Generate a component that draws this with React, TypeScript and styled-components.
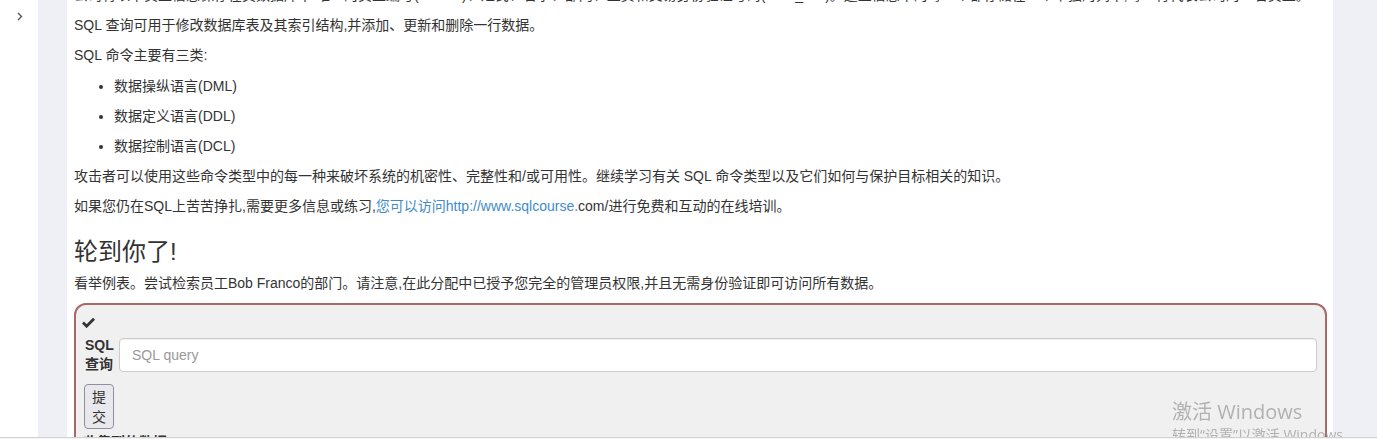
import React from "react";
import styled, { createGlobalStyle } from "styled-components";

const Global = createGlobalStyle`
  html, body { margin: 0; padding: 0; overflow: hidden; background: #fff; }
  body {
    font-family: "Liberation Sans", "Noto Sans CJK SC", Arial, sans-serif;
    font-size: 14px;
    line-height: 20px;
    color: #333;
  }
  * { box-sizing: border-box; }
`;

const Page = styled.div`
  display: flex;
  height: 439px;
  overflow: hidden;
`;

const Sidebar = styled.div`
  width: 38px;
  flex: none;
  background: #fff;
  padding: 6px 0 0 17px;
`;

const Band = styled.div<{ $w: number }>`
  width: ${(p) => p.$w}px;
  flex: none;
  background: #eff0f6;
`;

const Main = styled.main`
  flex: 1;
  background: #fff;
  padding: 0 6px 0 7px;
  min-width: 0;
`;

const Article = styled.div`
  margin-top: -15px;
`;

const P = styled.p`
  margin: 0 0 10px;
  white-space: nowrap;
`;

const List = styled.ul`
  margin: 11px 0 10px;
  padding-left: 40px;
`;

const Item = styled.li`
  margin: 0 0 10px;
  &::marker { font-size: 13px; }
`;

const Link = styled.a`
  color: #428bca;
  text-decoration: none;
`;

const Heading = styled.h3`
  margin: 23px 0 8px;
  font-size: 24px;
  line-height: 26.4px;
  font-weight: 400;
  color: #333;
`;

const AttackBox = styled.div`
  border: 2px solid #a96868;
  border-radius: 12px;
  background: #f0f0f0;
  padding: 7px 8px 0 6px;
  height: 200px;
`;

const CheckRow = styled.div`
  height: 20px;
  display: flex;
  align-items: center;
  color: #333;
`;

const FormRow = styled.div`
  display: flex;
  align-items: center;
  gap: 4px;
  margin-top: 4px;
  padding-left: 3px;
`;

const Label = styled.label`
  width: 30px;
  flex: none;
  font-weight: bold;
  line-height: 19px;
`;

const Input = styled.input`
  flex: 1;
  height: 34px;
  padding: 6px 12px;
  border: 1px solid #ccc;
  border-radius: 4px;
  background: #fff;
  font-family: "Liberation Sans", "Noto Sans CJK SC", Arial, sans-serif;
  font-size: 14px;
  color: #555;
  box-shadow: inset 0 1px 1px rgba(0, 0, 0, 0.075);
  &::placeholder { color: #999; }
`;

const SubmitButton = styled.button`
  display: block;
  width: 30px;
  margin: 10px 0 0 2px;
  padding: 1.5px 6px;
  border: 1px solid #8f8f9d;
  border-radius: 4px;
  background: #e9e9ed;
  font-family: "Liberation Sans", "Noto Sans CJK SC", Arial, sans-serif;
  font-size: 14px;
  line-height: 20px;
  color: #333;
  text-align: center;
`;

const Output = styled.div`
  margin-top: 3px;
  padding-left: 1px;
  font-weight: bold;
`;

const Watermark = styled.div`
  position: fixed;
  left: 1172px;
  top: 399px;
  color: rgba(150, 150, 150, 0.7);
  font-family: "Open Sans", "Noto Sans CJK SC", sans-serif;
  pointer-events: none;
`;

const WmTitle = styled.div`
  font-size: 20px;
  line-height: 26px;
`;

const WmSub = styled.div`
  font-size: 14px;
  line-height: 20px;
`;

const BottomEdge = styled.div`
  position: fixed;
  left: 0;
  right: 0;
  bottom: 0;
  height: 2px;
  border-top: 1px solid #d2d2d2;
  background: #f4f4f4;
`;

const Chevron = () => (
  <svg width="6" height="9" viewBox="0 0 6 9">
    <path d="M1 1 L4.5 4.5 L1 8" fill="none" stroke="#555" strokeWidth="1.4" />
  </svg>
);

const Check = () => (
  <svg width="13" height="11" viewBox="0 0 13 11">
    <path d="M1 5.6 L4.6 9.2 L12 1.8" fill="none" stroke="#333" strokeWidth="2.8" strokeLinejoin="miter" />
  </svg>
);

export default function App() {
  return (
    <>
      <Global />
      <Page>
        <Sidebar>
          <Chevron />
        </Sidebar>
        <Band $w={29} />
        <Main>
          <Article>
            <P>
              公司将以下员工信息保存在其数据库中:唯一的员工编号('userid')、姓氏、名字、部门、工资和交易身份验证号码('auth_tan')。这些信息中的每一个都存储在一个单独的列中,每一行代表公司的一名员工。
            </P>
            <P>SQL 查询可用于修改数据库表及其索引结构,并添加、更新和删除一行数据。</P>
            <P>SQL 命令主要有三类:</P>
            <List>
              <Item>数据操纵语言(DML)</Item>
              <Item>数据定义语言(DDL)</Item>
              <Item>数据控制语言(DCL)</Item>
            </List>
            <P>
              攻击者可以使用这些命令类型中的每一种来破坏系统的机密性、完整性和/或可用性。继续学习有关 SQL 命令类型以及它们如何与保护目标相关的知识。
            </P>
            <P>
              如果您仍在SQL上苦苦挣扎,需要更多信息或练习,
              <Link href="#">您可以访问http://www.sqlcourse.</Link>com/进行免费和互动的在线培训。
            </P>
            <Heading>轮到你了!</Heading>
            <P>看举例表。尝试检索员工Bob Franco的部门。请注意,在此分配中已授予您完全的管理员权限,并且无需身份验证即可访问所有数据。</P>
            <AttackBox>
              <CheckRow>
                <Check />
              </CheckRow>
              <FormRow>
                <Label>SQL 查询</Label>
                <Input placeholder="SQL query" />
              </FormRow>
              <SubmitButton>提交</SubmitButton>
              <Output>收集到的数据</Output>
            </AttackBox>
          </Article>
        </Main>
        <Band $w={44} />
      </Page>
      <Watermark>
        <WmTitle>激活 Windows</WmTitle>
        <WmSub>转到“设置”以激活 Windows。</WmSub>
      </Watermark>
      <BottomEdge />
    </>
  );
}
